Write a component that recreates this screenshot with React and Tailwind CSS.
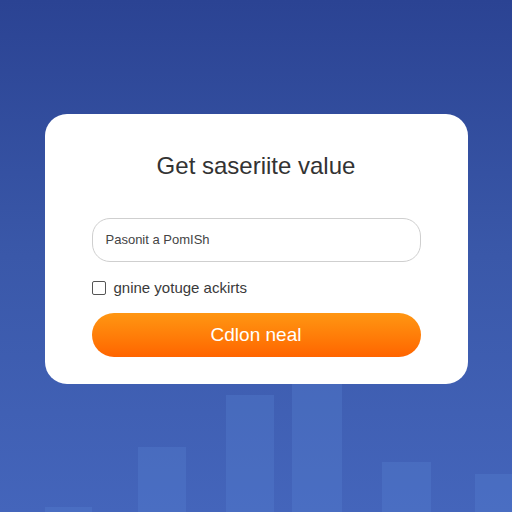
import React from "react";

// Decorative bar chart drawn behind the form card
function BackdropChart() {
  const bars = [
    { x: 45, w: 47, top: 507 },
    { x: 138, w: 48, top: 447 },
    { x: 226, w: 48, top: 395 },
    { x: 292, w: 50, top: 380 },
    { x: 382, w: 49, top: 462 },
    { x: 475, w: 40, top: 474 },
  ];
  return (
    <svg
      className="absolute inset-0"
      width="512"
      height="512"
      viewBox="0 0 512 512"
      aria-hidden="true"
    >
      {bars.map((b) => (
        <rect
          key={b.x}
          x={b.x}
          y={b.top}
          width={b.w}
          height={512 - b.top}
          fill="#5a86d4"
          fillOpacity="0.3"
        />
      ))}
    </svg>
  );
}

export default function App() {
  return (
    <div
      className="relative w-[512px] h-[512px] overflow-hidden bg-gradient-to-b from-[#2b4393] via-[#3a58a9] to-[#4465bb]"
      style={{ fontFamily: '"Liberation Sans", Arial, sans-serif' }}
    >
      <BackdropChart />
      <div className="relative flex justify-center pt-[114px]">
        <div className="w-[423px] h-[270px] rounded-[22px] bg-white px-[47px] pt-[38px] flex flex-col">
          <h1 className="text-center text-[24px] leading-[28px] text-[#333]">
            Get saseriite value
          </h1>
          <div className="mt-[38px] h-[44px] rounded-[18px] border border-[#cfcfcf] flex items-center px-[13px]">
            <span className="text-[13px] text-[#444]">Pasonit a PomISh</span>
          </div>
          <label className="mt-[15px] h-[22px] flex items-center gap-[8px]">
            <span className="w-[14px] h-[14px] rounded-[2px] border-[1.5px] border-[#555] bg-white" />
            <span className="text-[15px] text-[#3a3a3a]">gnine yotuge ackirts</span>
          </label>
          <button className="mt-[14px] h-[44px] rounded-full bg-gradient-to-b from-[#ff9612] to-[#ff6400] text-white text-[19px] flex items-center justify-center">
            Cdlon neal
          </button>
        </div>
      </div>
    </div>
  );
}
